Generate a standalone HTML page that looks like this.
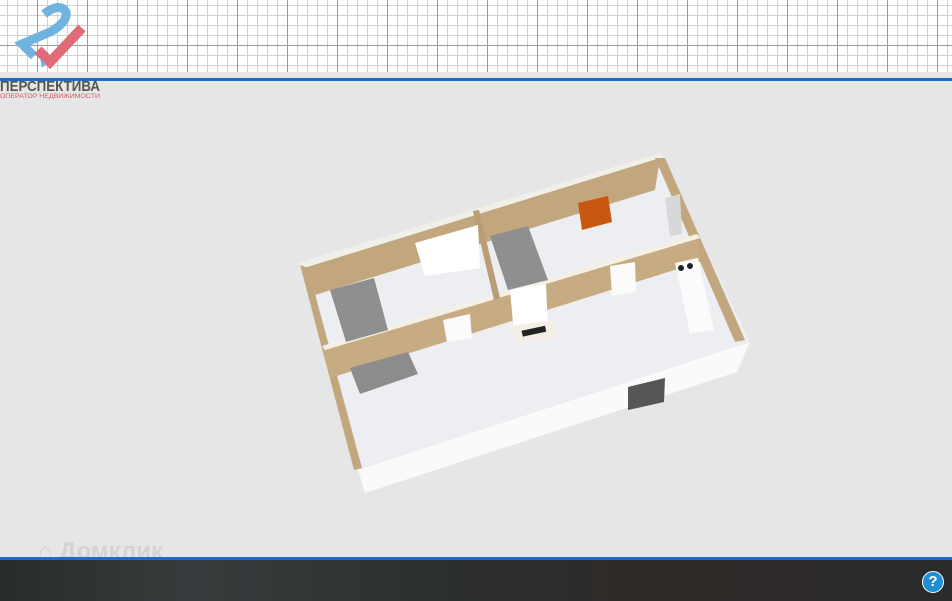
<!DOCTYPE html>
<html><head><meta charset="utf-8"><style>
body{margin:0;width:952px;height:601px;overflow:hidden;background:#e6e6e6;font-family:"Liberation Sans",sans-serif;position:relative}
#grid{position:absolute;left:0;top:0;width:952px;height:72px;background-color:#fff;
background-image:linear-gradient(90deg,#9a9a9a 1px,transparent 1px),linear-gradient(90deg,#d0d0d0 1px,transparent 1px),linear-gradient(#d0d0d0 1px,transparent 1px);
background-size:50px 100%,10px 100%,100% 10px;background-position:37px 0,7px 0,0 5px}
#gl{position:absolute;left:0;top:45px;width:952px;height:1px;background:#9a9a9a}
#bar1{position:absolute;left:0;top:78px;width:952px;height:3px;background:#1a6fc4}
#bar2{position:absolute;left:0;top:557px;width:952px;height:3px;background:#1a6fc4}
#foot{position:absolute;left:0;top:560px;width:952px;height:41px;background:linear-gradient(90deg,#2a2c2c,#363b3c 20%,#2c2e2e 50%,#302a28 70%,#2a2b2b)}
</style></head><body>
<div id="grid"></div><div id="gl"></div>
<svg style="position:absolute;left:0;top:0" width="110" height="100">
<path d="M44 14 Q60 2 66 12 Q68 22 50 32 L22 44 L34 56" fill="none" stroke="#6fb3df" stroke-width="9" stroke-linejoin="miter"/>
<path d="M38 50 L50 62 L82 28" fill="none" stroke="#e06b78" stroke-width="10"/>
<path d="M40 58 L46 64 L42 68 Z" fill="#6fb3df"/>
<text x="0" y="91" font-size="15" font-weight="bold" fill="#555" textLength="100" lengthAdjust="spacingAndGlyphs">ПЕРСПЕКТИВА</text>
<text x="0" y="98" font-size="6" fill="#d05a66" textLength="100" lengthAdjust="spacingAndGlyphs">ОПЕРАТОР НЕДВИЖИМОСТИ</text>
</svg>
<div id="bar1"></div>
<svg style="position:absolute;left:0;top:0" width="952" height="601">
<polygon points="358,470 750,342 737,372 365,493" fill="#fafafa"/>
<polygon points="298,263 660,153 750,342 358,470" fill="#eceef2"/>
<polygon points="298,263 660,153 665,158 304,268" fill="#f0efe8"/>
<polygon points="304,268 660,158 655,190 315,295" fill="#c2a77e"/>
<polygon points="655,158 665,158 745,340 735,342" fill="#c2a77e"/>
<polygon points="300,265 308,268 362,468 354,470" fill="#c2a77e"/>
<polygon points="322,348 697,236 700,262 330,378" fill="#c7ab82"/>
<polygon points="322,346 697,234 700,238 325,350" fill="#f5f0e5"/>
<polygon points="473,211 479,210 500,298 494,300" fill="#b99d75"/>
<polygon points="330,290 374,278 388,330 346,342" fill="#8f8f8f"/>
<polygon points="490,236 528,226 548,280 508,290" fill="#8f8f8f"/>
<polygon points="415,243 478,225 480,268 425,276" fill="#fff"/>
<polygon points="578,203 608,196 612,222 582,230" fill="#c8570f"/>
<polygon points="350,368 408,352 418,374 360,394" fill="#8c8c8c"/>
<polygon points="510,290 546,284 548,330 514,334" fill="#fff"/>
<polygon points="510,326 554,320 556,338 518,344" fill="#f4efe4"/>
<rect x="522" y="329" width="24" height="6" fill="#222" transform="rotate(-12 530 332)"/>
<polygon points="443,320 470,314 472,338 447,342" fill="#fbfbfb"/>
<polygon points="610,266 635,262 636,292 612,296" fill="#fbfbfb"/>
<polygon points="675,263 698,258 714,330 690,334" fill="#fbfbfb"/>
<circle cx="681" cy="268" r="3" fill="#222"/><circle cx="690" cy="266" r="3" fill="#222"/>
<polygon points="665,198 680,194 682,234 670,236" fill="#d8d8d8"/>
<polygon points="628,387 665,378 664,402 628,410" fill="#555"/>
</svg>
<div style="position:absolute;left:38px;top:538px;color:#cfcfcf;font-size:24px;font-weight:bold;opacity:.8">&#x2302; Домклик</div>
<div id="bar2"></div><div id="foot"></div>
<div style="position:absolute;left:922px;top:571px;width:20px;height:20px;border-radius:50%;background:#1d8fd6;border:1px solid #fff;color:#fff;font-size:15px;font-weight:bold;text-align:center;line-height:20px">?</div>
</body></html>
